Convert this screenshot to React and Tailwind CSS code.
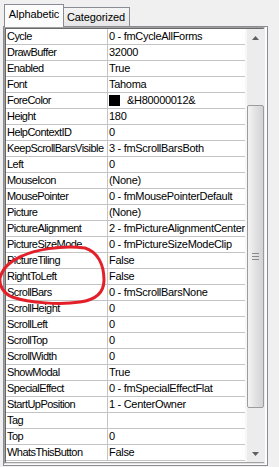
import React from "react";

const rows = [
  ["Cycle", "0 - fmCycleAllForms"],
  ["DrawBuffer", "32000"],
  ["Enabled", "True"],
  ["Font", "Tahoma"],
  ["ForeColor", "&H80000012&", true],
  ["Height", "180"],
  ["HelpContextID", "0"],
  ["KeepScrollBarsVisible", "3 - fmScrollBarsBoth"],
  ["Left", "0"],
  ["MouseIcon", "(None)"],
  ["MousePointer", "0 - fmMousePointerDefault"],
  ["Picture", "(None)"],
  ["PictureAlignment", "2 - fmPictureAlignmentCenter"],
  ["PictureSizeMode", "0 - fmPictureSizeModeClip"],
  ["PictureTiling", "False"],
  ["RightToLeft", "False"],
  ["ScrollBars", "0 - fmScrollBarsNone"],
  ["ScrollHeight", "0"],
  ["ScrollLeft", "0"],
  ["ScrollTop", "0"],
  ["ScrollWidth", "0"],
  ["ShowModal", "True"],
  ["SpecialEffect", "0 - fmSpecialEffectFlat"],
  ["StartUpPosition", "1 - CenterOwner"],
  ["Tag", ""],
  ["Top", "0"],
  ["WhatsThisButton", "False"],
];

function Row({ name, value, swatch }) {
  return (
    <div className="flex h-[16px] border-b border-[#c4c4c4] bg-white">
      <div className="w-[102px] shrink-0 border-r border-[#c4c4c4] pl-[1px] leading-[15px] tracking-[-0.55px] whitespace-nowrap overflow-hidden">
        {name}
      </div>
      <div className="flex-1 flex items-center pl-[1px] leading-[15px] whitespace-nowrap overflow-hidden">
        {swatch && (
          <span className="w-[11px] h-[11px] bg-black shrink-0 mr-[7px]" />
        )}
        <span>{value}</span>
      </div>
    </div>
  );
}

export default function App() {
  return (
    <div className="relative w-[279px] h-[467px] bg-[#f0f0f0] overflow-hidden font-['Liberation_Sans',Arial,sans-serif] text-[11px] tracking-[-0.3px] text-black">
      {/* Tabs */}
      <div className="flex items-end h-[26px] pl-[4px]">
        <div className="relative z-10 h-[23px] -mb-[1px] w-[60px] border-t border-l border-r border-[#898c95] bg-[#fcfcfc] flex items-start justify-center pt-[3px] leading-[13px] tracking-[-0.1px]">
          Alphabetic
        </div>
        <div className="h-[19px] w-[67px] -ml-[1px] border-t border-r border-[#898c95] bg-[linear-gradient(#f4f4f4,#e6e6e6)] flex items-start justify-center pt-[3px] leading-[13px] tracking-[-0.1px]">
          Categorized
        </div>
      </div>

      {/* Tab page */}
      <div className="ml-[3px] w-[265px] h-[440px] border border-[#898c95] bg-[#fcfcfc]">
        <div className="w-[261px] h-[437px] border-t border-l border-[#a0a0a0] border-r border-b border-r-[#e3e3e3] border-b-[#e3e3e3]">
          <div className="w-full h-full border-t border-l border-[#696969] border-r border-b border-r-[#a0a0a0] border-b-[#a0a0a0] flex">
            {/* Rows */}
            <div className="flex-1 flex flex-col bg-white">
              {rows.map(([n, v, s]) => (
                <Row key={n} name={n} value={v} swatch={s} />
              ))}
            </div>
            {/* Scrollbar */}
            <div className="w-[20px] shrink-0 flex flex-col bg-[#ececec] border-l-2 border-[#f7f7f7]">
              <div className="h-[17px] flex items-center justify-center">
                <svg width="7" height="4" viewBox="0 0 7 4">
                  <polygon points="0,4 7,4 3.5,0" fill="#606060" />
                </svg>
              </div>
              <div className="h-[59px]" />
              <div className="h-[303px] mr-[1px] rounded-[2px] border border-[#9c9c9c] bg-[linear-gradient(90deg,#f4f4f4,#e2e2e2_50%,#d2d2d2)] flex flex-col items-center justify-center gap-[2px]">
                <div className="w-[7px] h-[1px] bg-[#8a8a8a]" />
                <div className="w-[7px] h-[1px] bg-[#8a8a8a]" />
                <div className="w-[7px] h-[1px] bg-[#8a8a8a]" />
              </div>
              <div className="flex-1" />
              <div className="h-[17px] flex items-center justify-center">
                <svg width="7" height="4" viewBox="0 0 7 4">
                  <polygon points="0,0 7,0 3.5,4" fill="#606060" />
                </svg>
              </div>
            </div>
          </div>
        </div>
      </div>

      {/* Red hand-drawn annotation */}
      <svg
        className="absolute left-0 top-0 pointer-events-none"
        width="279"
        height="467"
        viewBox="0 0 279 467"
      >
        <path
          d="M 22 256 C 35 250, 60 245, 85 248 C 98 252, 104 265, 104 280 C 104 293, 95 300, 80 302 C 60 305, 30 303, 12 297 C 3 293, -1 285, 0 278 C 2 270, 8 262, 22 256"
          fill="none"
          stroke="#e3202a"
          strokeWidth="3"
          strokeLinecap="round"
        />
      </svg>
    </div>
  );
}
